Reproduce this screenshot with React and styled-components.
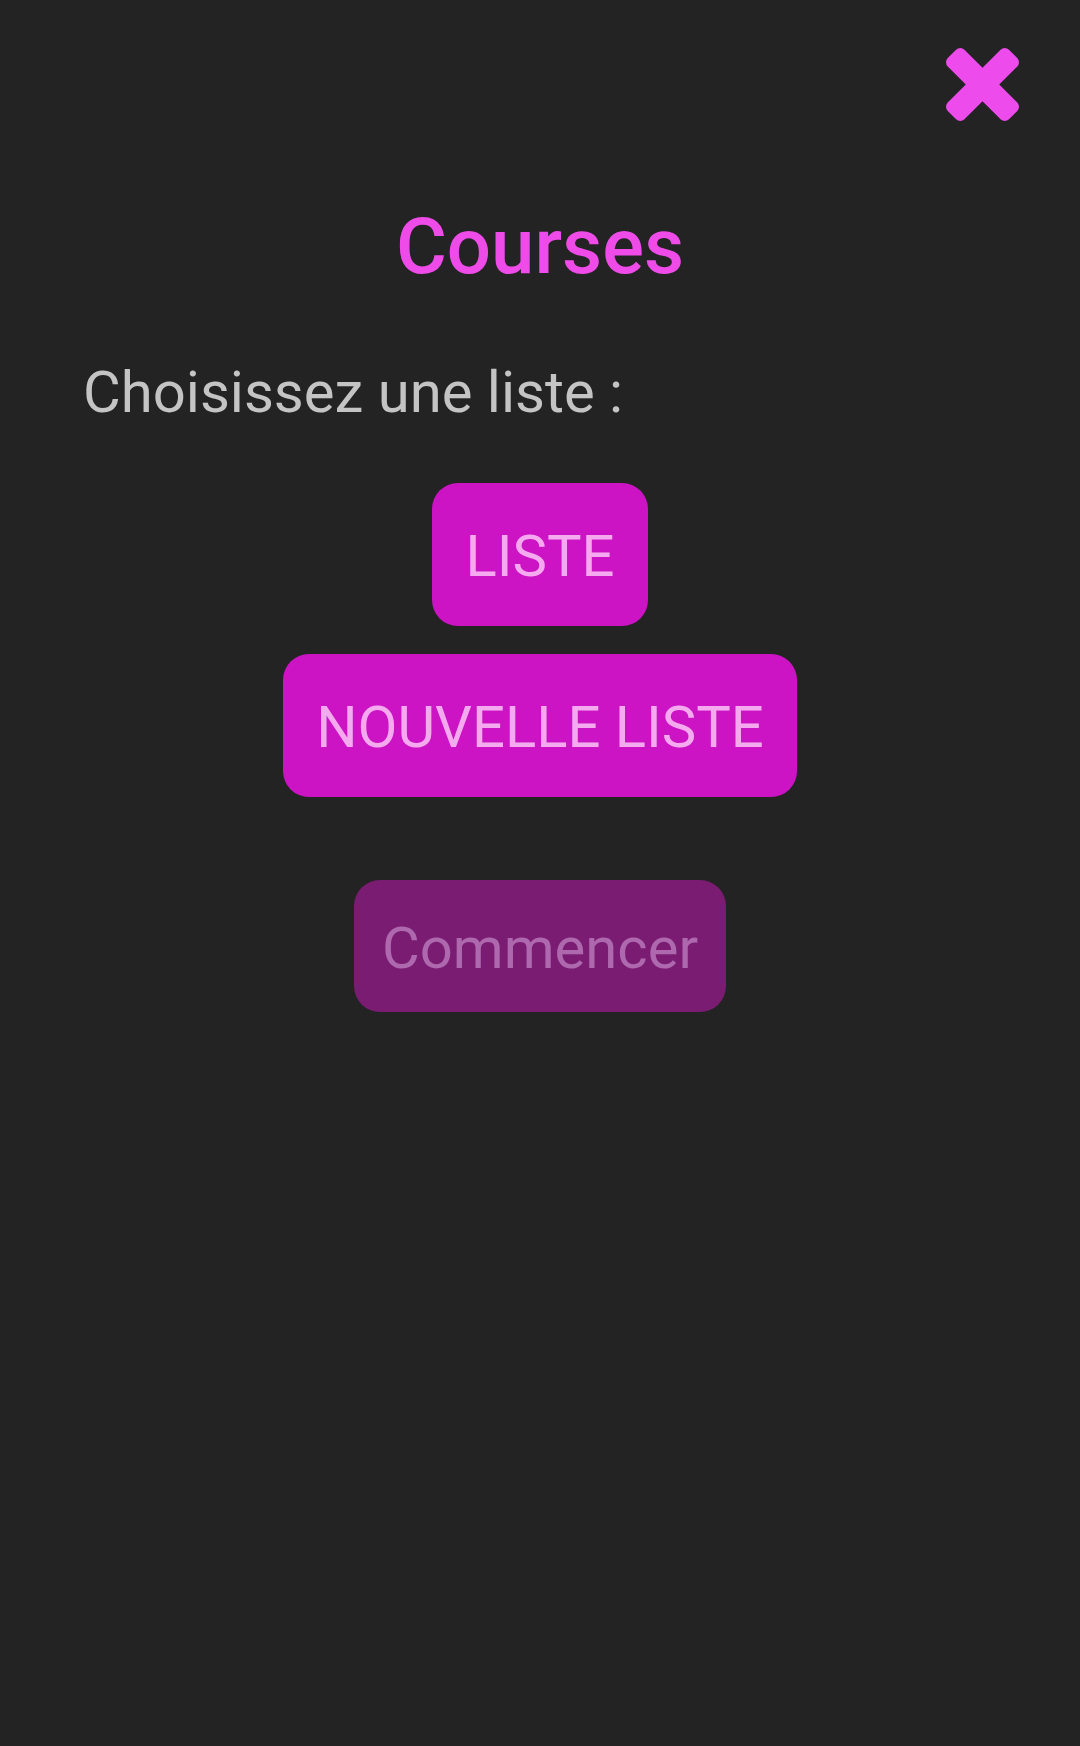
import React from "react";
import styled, { createGlobalStyle } from "styled-components";

const GlobalStyle = createGlobalStyle`
  html, body {
    margin: 0;
    padding: 0;
    background: #232323;
  }
  body {
    font-family: Roboto, "Noto Sans", "Liberation Sans", sans-serif;
  }
  * { box-sizing: border-box; }
`;

const Screen = styled.div`
  width: 1080px;
  min-height: 1746px;
  background: #232323;
  display: flex;
  flex-direction: column;
  padding: 48px 61px 0 83px;
`;

const TopBar = styled.div`
  display: flex;
  justify-content: flex-end;
  height: 73px;
`;

const CloseButton = styled.button`
  width: 73px;
  height: 73px;
  padding: 0;
  border: none;
  background: transparent;
  display: flex;
  align-items: center;
  justify-content: center;
  cursor: pointer;
  svg {
    width: 73px;
    height: 73px;
    display: block;
  }
`;

const Title = styled.h1`
  margin: 80px 0 0 -22px;
  align-self: center;
  font-family: Roboto, "Noto Sans", sans-serif;
  font-weight: 500;
  font-size: 78px;
  line-height: 91px;
  color: #ee4be8;
`;

const Prompt = styled.p`
  margin: 66px 0 0 0;
  font-family: Roboto, "Noto Sans", sans-serif;
  font-weight: 400;
  font-size: 58px;
  line-height: 68px;
  color: #c4c4c4;
`;

const Choices = styled.div`
  display: flex;
  flex-direction: column;
  align-items: center;
  gap: 28px;
  margin: 57px 0 0 -22px;
`;

const Button = styled.button`
  border: none;
  border-radius: 26px;
  font-family: Roboto, "Noto Sans", sans-serif;
  font-weight: 400;
  cursor: pointer;
  font-size: 58px;
  line-height: 68px;
  padding: ${(p) => (p.$small ? "34px 28px 30px" : "39px 33px 36px")};
  background: ${(p) => (p.$disabled ? "#7a1c72" : "#cc14c4")};
  color: ${(p) => (p.$disabled ? "#ae68ae" : "#f5aaf0")};
`;

const StartRow = styled.div`
  display: flex;
  justify-content: center;
  margin: 83px 0 0 -22px;
`;

function XIcon() {
  return (
    <svg viewBox="110 366 1188 1188" fill="#ee4bec" aria-hidden="true">
      <path d="M1298 1322q0 40-28 68l-136 136q-28 28-68 28t-68-28l-294-294-294 294q-28 28-68 28t-68-28l-136-136q-28-28-28-68t28-68l294-294-294-294q-28-28-28-68t28-68l136-136q28-28 68-28t68 28l294 294 294-294q28-28 68-28t68 28l136 136q28 28 28 68t-28 68l-294 294 294 294q28 28 28 68z" />
    </svg>
  );
}

export default function App() {
  return (
    <>
      <GlobalStyle />
      <Screen>
        <TopBar>
          <CloseButton aria-label="Fermer">
            <XIcon />
          </CloseButton>
        </TopBar>
        <Title>Courses</Title>
        <Prompt>Choisissez une liste :</Prompt>
        <Choices>
          <Button>LISTE</Button>
          <Button>NOUVELLE LISTE</Button>
        </Choices>
        <StartRow>
          <Button $small $disabled>Commencer</Button>
        </StartRow>
      </Screen>
    </>
  );
}
